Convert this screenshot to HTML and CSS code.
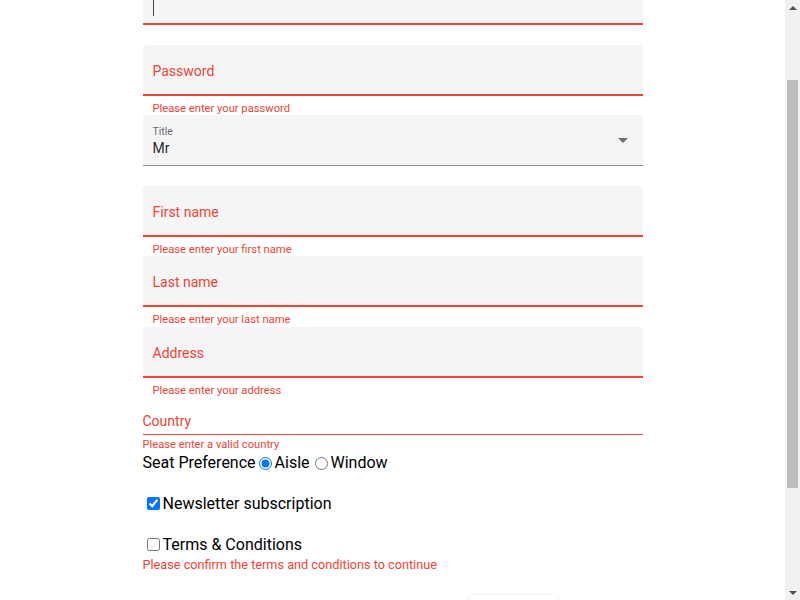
FILE: index.html
```html
<!DOCTYPE html>
<html lang="en">
<head>
<meta charset="utf-8">
<title>Registration</title>
<link rel="stylesheet" href="styles.css">
</head>
<body>
<form class="form">
  <div class="field">
    <div class="box invalid">
      <span class="caret"></span>
    </div>
    <div class="sub"></div>
  </div>

  <div class="field">
    <div class="box invalid"><span class="label">Password</span></div>
    <div class="sub">Please enter your password</div>
  </div>

  <div class="field">
    <div class="box select">
      <div class="sel-text">
        <span class="float">Title</span>
        <span class="value">Mr</span>
      </div>
      <span class="arrow"></span>
    </div>
    <div class="sub"></div>
  </div>

  <div class="field">
    <div class="box invalid"><span class="label">First name</span></div>
    <div class="sub">Please enter your first name</div>
  </div>

  <div class="field">
    <div class="box invalid"><span class="label">Last name</span></div>
    <div class="sub">Please enter your last name</div>
  </div>

  <div class="field">
    <div class="box invalid"><span class="label">Address</span></div>
    <div class="sub">Please enter your address</div>
  </div>

  <div class="legacy">
    <div class="legacy-label">Country</div>
    <div class="legacy-sub">Please enter a valid country</div>
  </div>

  <div class="seat">
    <span>Seat Preference</span>
    <label class="opt first"><input type="radio" name="seat" checked>Aisle</label>
    <label class="opt"><input type="radio" name="seat">Window</label>
  </div>

  <div class="check news"><label><input type="checkbox" checked>Newsletter subscription</label></div>
  <div class="check terms"><label><input type="checkbox">Terms &amp; Conditions</label></div>
  <div class="terms-error">Please confirm the terms and conditions to continue</div>

  <div class="actions">
    <button type="button" class="btn">Register</button>
  </div>
</form>

<div class="scrollbar" aria-hidden="true">
  <span class="sb-up"></span>
  <span class="sb-track"><span class="sb-thumb"></span></span>
  <span class="sb-down"></span>
</div>
<script src="script.js"></script>
</body>
</html>
```

FILE: styles.css
```css
html, body {
  margin: 0;
  padding: 0;
}
body {
  font-family: Roboto, "Liberation Sans", Arial, sans-serif;
  color: #000;
  background: #fff;
  padding-right: 15px;
}
.form {
  width: 500px;
  margin: 0 auto;
  padding: 70px 0 112px;
}
.field {
  display: flex;
  flex-direction: column;
}
.box {
  height: 50px;
  background: #f5f5f5;
  border-radius: 4px 4px 0 0;
  border-bottom: 1px solid rgba(0, 0, 0, 0.42);
  padding: 0 10px;
  box-sizing: content-box;
  display: flex;
  align-items: flex-start;
}
.box.invalid {
  height: 49px;
  border-bottom: 2px solid #f44336;
}
.caret {
  width: 1px;
  height: 16px;
  margin-top: 26px;
  background: #5a3a38;
}
.label {
  font-size: 14px;
  line-height: 16px;
  margin-top: 18px;
  color: #f44336;
}
.sub {
  font-size: 11.2px;
  line-height: 12.5px;
  height: 12.5px;
  margin-top: 7px;
  padding: 0 10px;
  color: #f44336;
}
.select {
  align-items: center;
  justify-content: space-between;
}
.sel-text {
  display: flex;
  flex-direction: column;
  padding-top: 3px;
}
.float {
  font-size: 10.5px;
  line-height: 12px;
  color: rgba(0, 0, 0, 0.6);
}
.value {
  font-size: 14px;
  line-height: 20px;
  color: rgba(0, 0, 0, 0.87);
}
.arrow {
  width: 0;
  height: 0;
  border-left: 5px solid transparent;
  border-right: 5px solid transparent;
  border-top: 5px solid rgba(0, 0, 0, 0.54);
  margin-right: 5px;
  margin-top: 0;
}
.legacy {
  padding-top: 16px;
}
.legacy-label {
  font-size: 14px;
  line-height: 16px;
  color: #f44336;
  padding-bottom: 5px;
  border-bottom: 1px solid #f44336;
}
.legacy-sub {
  font-size: 11.2px;
  line-height: 12px;
  margin-top: 4px;
  color: #f44336;
}
.seat {
  font-size: 16px;
  line-height: 20px;
  margin-top: 2px;
  display: flex;
  align-items: center;
}
.opt {
  display: inline-flex;
  align-items: center;
}
.opt input {
  margin: 0 3px 0 5px;
}
.opt.first input {
  margin-left: 3px;
}
.check {
  font-size: 16px;
  line-height: 19px;
}
.check label {
  display: inline-flex;
  align-items: center;
}
.check input {
  margin: 3px 3px 3px 4px;
}
.news {
  margin-top: 21px;
}
.terms {
  margin-top: 21px;
}
.terms-error {
  font-size: 12.7px;
  line-height: 14px;
  margin-top: 3px;
  color: #f44336;
}
.actions {
  margin-top: 23px;
  padding-left: 327px;
}
.btn {
  width: 87px;
  height: 36px;
  border: none;
  border-radius: 4px;
  background: #fff;
  font-family: Roboto, "Liberation Sans", Arial, sans-serif;
  font-size: 14px;
  font-weight: 500;
  color: rgba(0, 0, 0, 0.87);
  box-shadow: 0 3px 1px -2px rgba(0, 0, 0, 0.2), 0 2px 2px 0 rgba(0, 0, 0, 0.14), 0 1px 5px 0 rgba(0, 0, 0, 0.12);
}

/* classic scrollbar overlay */
.scrollbar {
  position: fixed;
  top: 0;
  right: 0;
  width: 15px;
  height: 100vh;
  background: #f1f1f1;
  display: flex;
  flex-direction: column;
  align-items: center;
}
.sb-up, .sb-down {
  flex: 0 0 15px;
  width: 15px;
  display: flex;
  justify-content: center;
  align-items: center;
}
.sb-up::before {
  content: "";
  border-left: 4px solid transparent;
  border-right: 4px solid transparent;
  border-bottom: 4px solid #505050;
}
.sb-down::before {
  content: "";
  border-left: 4px solid transparent;
  border-right: 4px solid transparent;
  border-top: 4px solid #505050;
}
.sb-track {
  flex: 1;
  width: 15px;
  display: flex;
  justify-content: center;
}
.sb-thumb {
  width: 11px;
  height: 408px;
  margin-top: 65px;
  background: #bdbdbd;
}
```

FILE: script.js
```js
window.scrollTo(0, 96);
window.addEventListener('load', function () { window.scrollTo(0, 96); });
```
